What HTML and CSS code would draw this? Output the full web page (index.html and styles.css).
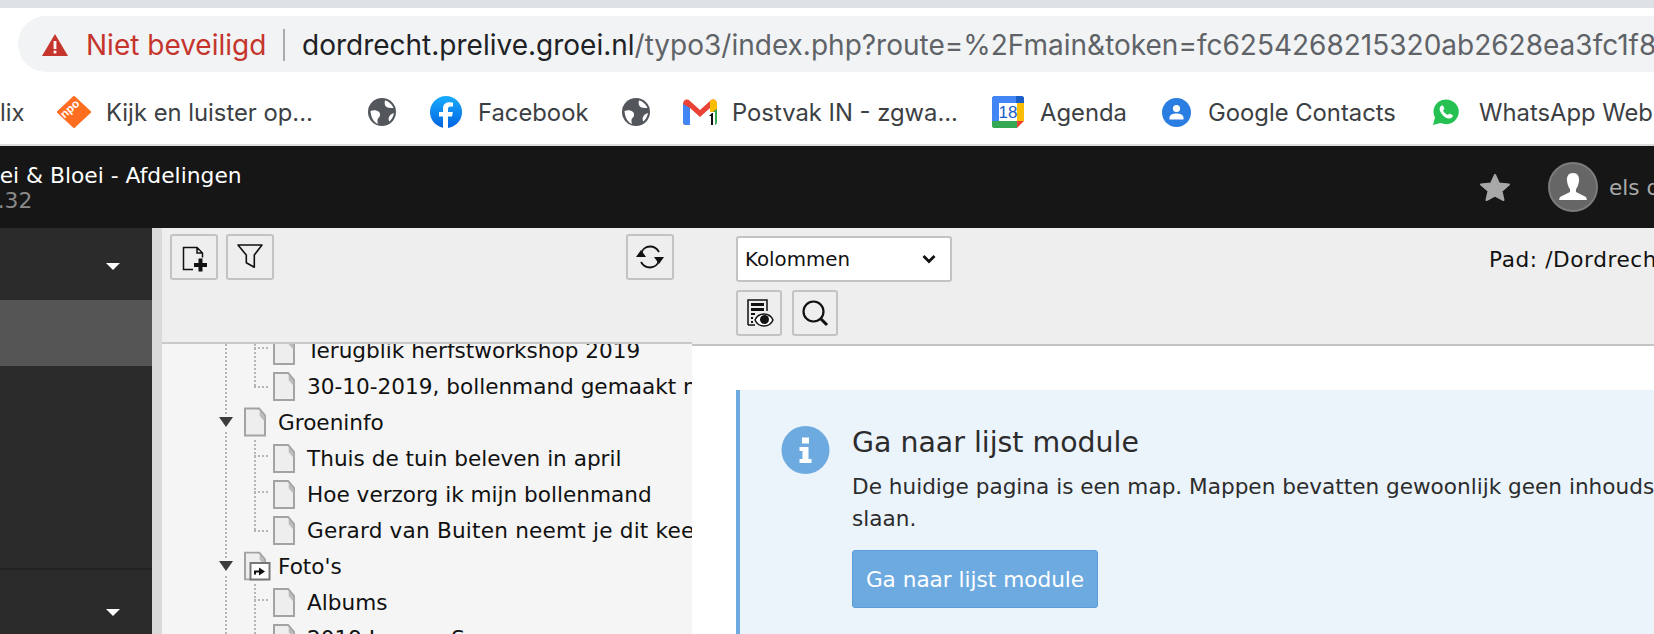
FILE: index.html
```html
<!DOCTYPE html>
<html lang="nl">
<head>
<meta charset="utf-8">
<title>Groei &amp; Bloei</title>
<link rel="stylesheet" href="styles.css">
</head>
<body>
<svg class="defs" width="0" height="0" aria-hidden="true">
  <symbol id="page" viewBox="0 0 22 29">
    <path d="M1 1H15L21 8V28H1Z" fill="#eeeeee" stroke="#a3a3a3" stroke-width="2"/>
    <path d="M15 1V8H21Z" fill="#fff"/>
    <path d="M15.5 2L20.5 8V14L15.5 8Z" fill="#bdbdbd"/>
    <path d="M15 1L21 8" stroke="#a3a3a3" stroke-width="1.4" fill="none"/>
  </symbol>
  <symbol id="globe" viewBox="0 0 28 28">
    <circle cx="14" cy="14" r="14" fill="#53575c"/>
    <path d="M17 2.500C20 3 24 6 25.500 10C22 10 19 10 17.500 8C16.500 6.500 16.500 4 17 2.500ZM2.500 13C5 12 9 12 11 14C13 16 12 19 10 20.500C9 22 9.500 24 10 26C6 24.500 3 20 2.500 13ZM26 15C25.500 18 24 21 21.500 23.500C20 22 20.500 19 22 17.500C23 16 24.500 15.500 26 15Z" fill="#fff"/>
  </symbol>
</svg>

<div class="tabstrip"></div>
<div class="urlbar">
  <div class="pill">
    <svg class="warn" viewBox="0 0 26 22"><path d="M13 0L26 22H0Z" fill="#c5352c"/><rect x="11.6" y="7" width="2.8" height="8" fill="#fff"/><rect x="11.6" y="16.6" width="2.8" height="2.8" fill="#fff"/></svg>
    <span class="insecure">Niet beveiligd</span>
    <span class="urlsep"></span>
    <span class="url"><b class="domain">dordrecht.prelive.groei.nl</b>/typo3/index.php?route=%2Fmain&amp;token=fc6254268215320ab2628ea3fc1f8</span>
  </div>
</div>
<div class="bookmarks">
  <span class="bm bm-lix">lix</span>
  <span class="bm bm-npo">
    <svg class="ic-npo" viewBox="0 0 34 32"><path d="M17 1.500L32.500 16L17 30.500L1.500 16Z" fill="#ff6d20" stroke="#ff6d20" stroke-width="3" stroke-linejoin="round"/><text x="13" y="16.500" class="npo-t" text-anchor="middle" transform="rotate(-42 13 13)">npo</text></svg>
    Kijk en luister op...
  </span>
  <svg class="ic-globe g1"><use href="#globe"/></svg>
  <span class="bm bm-fb">
    <svg class="ic-fb" viewBox="0 0 32 32"><defs><linearGradient id="fbg" x1="0" y1="0" x2="0" y2="1"><stop offset="0" stop-color="#18acfe"/><stop offset="1" stop-color="#0163e0"/></linearGradient></defs><circle cx="16" cy="16" r="16" fill="url(#fbg)"/><path d="M22 20.5L22.8 16H18V13C18 11.7 18.7 10.6 20.6 10.6H23V6.6C23 6.6 21 6.3 19.2 6.3C15.4 6.3 13 8.6 13 12.6V16H9V20.5H13V32H18V20.5Z" fill="#fff"/></svg>
    Facebook
  </span>
  <svg class="ic-globe g2"><use href="#globe"/></svg>
  <span class="bm bm-gm">
    <svg class="ic-gm" viewBox="0 0 34 26"><path d="M0 5C0 1 4 -1 7 2L17 11L27 2C30 -1 34 1 34 5V23L27 26V9L17 18L7 9V26H3C1 26 0 25 0 23Z" fill="#ea4335"/><path d="M0 5V23C0 25 1 26 3 26H7V9Z" fill="#4285f4"/><path d="M27 2C30 -1 34 1 34 5V10L27 15Z" fill="#fbbc04"/><path d="M27 15L34 10V23C34 25 33 26 31 26H27Z" fill="#34a853"/><rect x="25" y="13" width="7" height="13" fill="#fff"/><path d="M26 17L29 14H30V26H28V17Z" fill="#111"/></svg>
    Postvak IN - zgwa...
  </span>
  <span class="bm bm-ag">
    <svg class="ic-ag" viewBox="0 0 32 32"><rect width="32" height="32" rx="2" fill="#fff"/><path d="M2 0H24V7H7V25H0V2C0 1 1 0 2 0Z" fill="#4285f4"/><path d="M24 0H30C31 0 32 1 32 2V7H24Z" fill="#1a5fc8"/><path d="M25 7H32V25H25Z" fill="#fbbc04"/><path d="M0 25H25V32H2C1 32 0 31 0 30Z" fill="#34a853"/><path d="M25 25H32L25 32Z" fill="#ea4335"/><text x="16" y="22" class="ag-t" text-anchor="middle">18</text></svg>
    Agenda
  </span>
  <span class="bm bm-gc">
    <svg class="ic-gc" viewBox="0 0 29 29"><circle cx="14.5" cy="14.5" r="14.5" fill="#2a7de1"/><circle cx="14.5" cy="10.5" r="3.6" fill="#fff"/><path d="M7.5 20C7.5 16.5 11 15.5 14.5 15.5C18 15.5 21.5 16.5 21.5 20V21.5H7.5Z" fill="#fff"/></svg>
    Google Contacts
  </span>
  <span class="bm bm-wa">
    <svg class="ic-wa" viewBox="0 0 26 26"><path d="M0 26L2 18.5C-1 13 0.500 6 6 2.500C11 -1 18 0 22.500 4.500C27 9.500 27 16.500 22 21.500C18 25.500 12.500 26 7.500 24Z" fill="#25c152"/><path d="M8.500 6.500C7 7.500 6 9.500 7 12C8.500 15.500 11.500 18.500 15 19.500C17.500 20 19.500 18.500 20 16.500L16.500 14.500L15 16C13 15.500 11 13.500 10 11.500L11.500 10L10 6.500Z" fill="#fff"/></svg>
    WhatsApp Web
  </span>
</div>

<header class="appbar">
  <div class="site">
    <div class="site-name">Groei &amp; Bloei - Afdelingen</div>
    <div class="site-ver">9.5.32</div>
  </div>
  <div class="appbar-right">
    <svg class="star" viewBox="0 0 32 28"><path d="M16 2L20 10.500L30 11.500L22.500 18L24.500 27L16 22.500L7.500 27L9.500 18L2 11.500L12 10.500Z" fill="#a8a8a8" stroke="#a8a8a8" stroke-width="2" stroke-linejoin="round"/></svg>
    <span class="avatar"><svg viewBox="0 0 50 50"><circle cx="25" cy="25" r="24" fill="#666" stroke="#7c7c7c" stroke-width="2"/><path d="M25 11C20.500 11 18.500 14.500 19 19C19.500 23 21 26 22 27V30L12 35L11 38H39L38 35L28 30V27C29 26 30.500 23 31 19C31.500 14.500 29.500 11 25 11Z" fill="#fff"/></svg></span>
    <span class="username">els de Groot</span>
  </div>
</header>

<main class="app">
  <nav class="sidebar">
    <div class="side-head"><i class="caret"></i></div>
    <div class="side-active"></div>
    <div class="side-body"></div>
    <div class="side-head side-second"><i class="caret"></i></div>
  </nav>
  <div class="gutter"></div>
  <section class="treepane">
    <div class="tree-tools">
      <div class="tools-left">
        <button class="tbtn">
          <svg viewBox="0 0 30 30"><path d="M14 27.500H4.500V5.500H18L23.500 11V15.500M18 5.500V11H23.500" fill="none" stroke="#111" stroke-width="1.500"/><path d="M19.500 16.500H23.500V21H28V25H23.500V29.500H19.500V25H15V21H19.500Z" fill="#111"/></svg>
        </button>
        <button class="tbtn">
          <svg viewBox="0 0 30 30"><path d="M3 3H27L19.300 13V25.300L11.300 20.700V13Z" fill="none" stroke="#111" stroke-width="1.600" stroke-linejoin="round"/></svg>
        </button>
      </div>
      <button class="tbtn">
        <svg viewBox="0 0 30 30"><path d="M6 12C7 7 11 4.500 15 4.500C19 4.500 22 6.500 24 10M24 18C23 23 19 25.500 15 25.500C11 25.500 8 23.500 6 20" fill="none" stroke="#111" stroke-width="1.800"/><path d="M1 15L6 8L11 15ZM19 15H29L24 22Z" fill="#111"/></svg>
      </button>
    </div>
    <div class="tree">
      <ul class="tree-list">
        <li class="row l2"><svg class="pg"><use href="#page"/></svg><span>Terugblik herfstworkshop 2019</span></li>
        <li class="row l2 last"><svg class="pg"><use href="#page"/></svg><span>30-10-2019, bollenmand gemaakt met de kinderen</span></li>
        <li class="row l1"><i class="tri"></i><svg class="pg"><use href="#page"/></svg><span>Groeninfo</span></li>
        <li class="row l2"><svg class="pg"><use href="#page"/></svg><span>Thuis de tuin beleven in april</span></li>
        <li class="row l2"><svg class="pg"><use href="#page"/></svg><span>Hoe verzorg ik mijn bollenmand</span></li>
        <li class="row l2 last"><svg class="pg"><use href="#page"/></svg><span class="wide">Gerard van Buiten neemt je dit keer mee</span></li>
        <li class="row l1"><i class="tri"></i>
          <svg class="pg pg-link" viewBox="0 0 27 29"><use href="#page" width="22" height="29"/><rect x="6.500" y="11.500" width="19" height="16.500" fill="#fff" stroke="#777" stroke-width="2"/><path d="M10 23V19H15V16L21 20L15 24V21H12V23Z" fill="#111"/></svg>
          <span>Foto's</span></li>
        <li class="row l2"><svg class="pg"><use href="#page"/></svg><span>Albums</span></li>
        <li class="row l2"><svg class="pg"><use href="#page"/></svg><span>2019 Jaar op Spoor</span></li>
      </ul>
    </div>
  </section>
  <section class="content">
    <div class="doc-tools">
      <div class="doc-left">
        <div class="select"><span>Kolommen</span><svg viewBox="0 0 14 10"><path d="M1.500 2L7 7.500L12.500 2" fill="none" stroke="#111" stroke-width="2.800"/></svg></div>
        <div class="doc-btns">
          <button class="tbtn tbtn-doc">
            <svg viewBox="0 0 30 30"><path d="M4 27V2H23V13" fill="none" stroke="#111" stroke-width="1.500"/><path d="M4 27H11" stroke="#111" stroke-width="1.500"/><rect x="7" y="5" width="13" height="3" fill="#111"/><rect x="7" y="10" width="13" height="3" fill="#111"/><rect x="7" y="15" width="4" height="2" fill="#111"/><rect x="7" y="19" width="2" height="2" fill="#111"/><rect x="7" y="23" width="2" height="2" fill="#111"/><path d="M11 22C13 17.500 16 16 20 16C24 16 27 17.500 29 22C27 26.500 24 28 20 28C16 28 13 26.500 11 22Z" fill="#fff" stroke="#111" stroke-width="1.500"/><circle cx="20.500" cy="21.500" r="4.500" fill="#111"/></svg>
          </button>
          <button class="tbtn tbtn-doc">
            <svg viewBox="0 0 30 30"><circle cx="13.500" cy="13.500" r="10" fill="none" stroke="#111" stroke-width="2.200"/><path d="M21 21L27 27" stroke="#111" stroke-width="3"/></svg>
          </button>
        </div>
      </div>
      <div class="path">Pad: /Dordrecht/Groei &amp; Bloei</div>
    </div>
    <div class="doc-body">
      <div class="alert">
        <svg class="alert-ic" viewBox="0 0 48 48"><circle cx="24" cy="24" r="24" fill="#6daae0"/><rect x="20.500" y="11.500" width="7" height="6" fill="#fff"/><path d="M18 21H27V33H30V37H18V33H21V25H18Z" fill="#fff"/></svg>
        <div class="alert-main">
          <h4 class="alert-title">Ga naar lijst module</h4>
          <p class="alert-text">De huidige pagina is een map. Mappen bevatten gewoonlijk geen inhoudselementen en worden daarom beter overge-<br>slaan.</p>
          <button class="alert-btn">Ga naar lijst module</button>
        </div>
      </div>
    </div>
  </section>
</main>
</body>
</html>
```
FILE: styles.css
```css
* { box-sizing: border-box; }
html, body { margin: 0; padding: 0; }
body {
  width: 1654px;
  height: 634px;
  overflow: hidden;
  background: #fff;
  font-family: "DejaVu Sans", Verdana, sans-serif;
}
.defs { display: block; height: 0; }

/* browser chrome */
.tabstrip { height: 8px; background: #dee1e6; }
.urlbar { height: 72px; padding: 8px 0 0 18px; overflow: hidden; }
.pill {
  display: flex;
  align-items: center;
  width: 1700px;
  height: 56px;
  padding: 2px 0 0 24px;
  border-radius: 28px;
  background: #f1f3f4;
  font-family: Inter, "Liberation Sans", sans-serif;
  font-size: 28px;
  white-space: nowrap;
}
.warn { width: 26px; height: 22px; flex: none; }
.insecure { margin-left: 18px; color: #c5352c; width: 180px; flex: none; }
.urlsep { width: 2px; height: 32px; margin: 0 17px 0 17px; background: #a9abad; flex: none; }
.url { color: #5f6368; }
.domain { color: #202124; font-weight: 400; }

.bookmarks {
  display: flex;
  align-items: center;
  height: 66px;
  overflow: hidden;
  white-space: nowrap;
  font-family: Inter, "Liberation Sans", sans-serif;
  font-size: 23.8px;
  color: #3c4043;
  border-bottom: 2px solid #dcdcdc;
}
.bm { display: inline-flex; align-items: center; flex: none; }
.bm svg { flex: none; }
.bm-lix { width: 57px; }
.bm-npo { width: 311px; gap: 15px; }
.ic-npo { width: 34px; height: 32px; }
.npo-t { font: 700 11.500px "Liberation Sans", sans-serif; fill: #fff; }
.ic-globe { width: 28px; height: 28px; flex: none; }
.g1 { margin-right: 34px; }
.bm-fb { width: 192px; gap: 16px; }
.ic-fb { width: 32px; height: 32px; }
.g2 { margin-right: 33px; }
.bm-gm { width: 309px; gap: 15px; }
.ic-gm { width: 34px; height: 26px; }
.bm-ag { width: 170px; gap: 16px; }
.ic-ag { width: 32px; height: 32px; }
.ag-t { font: 400 17px "Liberation Sans", sans-serif; fill: #1a5fc8; }
.bm-gc { width: 271px; gap: 17px; }
.ic-gc { width: 29px; height: 29px; }
.bm-wa { gap: 20px; }
.ic-wa { width: 26px; height: 26px; }

/* application header */
.appbar {
  display: flex;
  justify-content: space-between;
  height: 82px;
  background: #161616;
  overflow: hidden;
}
.site { margin-left: -39px; padding-top: 17px; }
.site-name { font-size: 21.800px; line-height: 26px; color: #fff; white-space: nowrap; }
.site-ver { padding-left: 2px; font-size: 21.800px; line-height: 24px; color: #8a8a8a; }
.appbar-right { display: flex; align-items: center; width: 175px; flex: none; white-space: nowrap; overflow: hidden; }
.star { width: 32px; height: 28px; flex: none; }
.avatar { width: 50px; height: 50px; margin-left: 37px; flex: none; }
.avatar svg { display: block; width: 50px; height: 50px; }
.username { margin-left: 11px; font-size: 21.6px; color: #aaaaaa; }

/* layout */
.app { display: flex; height: 406px; }
.sidebar { width: 152px; flex: none; display: flex; flex-direction: column; background: #2b2b2b; }
.side-head { height: 72px; display: flex; align-items: center; justify-content: flex-end; padding: 4px 32px 0 0; background: #2b2b2b; }
.side-active { height: 66px; background: #555555; }
.side-body { height: 204px; background: #2b2b2b; border-bottom: 2px solid #222; }
.side-second { height: 64px; padding-top: 20px; }
.caret { width: 0; height: 0; border-left: 7px solid transparent; border-right: 7px solid transparent; border-top: 7px solid #fff; }
.gutter { width: 10px; flex: none; background: #dadada; }

/* tree */
.treepane { width: 530px; flex: none; display: flex; flex-direction: column; background: #f5f5f5; overflow: hidden; }
.tree-tools {
  height: 116px;
  flex: none;
  display: flex;
  align-items: flex-start;
  justify-content: space-between;
  padding: 6px 18px 0 8px;
  background: #eeeeee;
  border-bottom: 2px solid #c9c9c9;
}
.tools-left { display: flex; gap: 8px; }
.tbtn {
  display: flex;
  align-items: center;
  justify-content: center;
  width: 48px;
  height: 46px;
  padding: 0;
  background: #eeeeee;
  border: 2px solid #c3c3c3;
  border-radius: 3px;
}
.tbtn svg { width: 30px; height: 30px; display: block; }
.tree { flex: 1; overflow: hidden; }
.tree-list { list-style: none; margin: -12px 0 0; padding: 0; }
.row {
  display: flex;
  align-items: center;
  height: 36px;
  white-space: nowrap;
  font-size: 21.6px;
  color: #111;
  background-repeat: no-repeat, no-repeat, no-repeat;
}
.pg { width: 22px; height: 29px; flex: none; }
.l1 {
  padding-left: 57px;
  background-image:
    repeating-linear-gradient(to bottom, #b5b5b5 0 2px, transparent 2px 4px),
    repeating-linear-gradient(to bottom, #b5b5b5 0 2px, transparent 2px 4px);
  background-size: 2px 10px, 2px 8px;
  background-position: 63px 0, 63px 28px;
}
.l1 .pg { margin-left: 11px; height: 30px; }
.l1 .pg-link { width: 27px; }
.l1 span { margin-left: 12px; }
.l1 .pg-link + span { margin-left: 7px; }
.tri { width: 0; height: 0; flex: none; border-left: 7px solid transparent; border-right: 7px solid transparent; border-top: 10px solid #3d3d3d; }
.l2 {
  padding-left: 111px;
  background-image:
    repeating-linear-gradient(to bottom, #b5b5b5 0 2px, transparent 2px 4px),
    repeating-linear-gradient(to bottom, #b5b5b5 0 2px, transparent 2px 4px),
    repeating-linear-gradient(to right, #b5b5b5 0 2px, transparent 2px 4px);
  background-size: 2px 100%, 2px 100%, 15px 2px;
  background-position: 63px 0, 92px 0, 92px 15px;
}
.l2.last { background-size: 2px 100%, 2px 18px, 15px 2px; background-position: 63px 0, 92px 0, 92px 18px; }
.l2 span { margin-left: 12px; }
.l2 .wide { letter-spacing: 0.2px; }

/* content */
.content { flex: 1; min-width: 0; display: flex; flex-direction: column; background: #fff; }
.doc-tools {
  height: 118px;
  flex: none;
  display: flex;
  justify-content: space-between;
  padding: 8px 0 0 44px;
  background: #eeeeee;
  border-bottom: 2px solid #c4c4c4;
}
.doc-left { display: flex; flex-direction: column; gap: 8px; }
.select {
  display: flex;
  align-items: center;
  justify-content: space-between;
  width: 216px;
  height: 46px;
  padding: 0 14px 0 7px;
  background: #fff;
  border: 2px solid #c3c3c3;
  border-radius: 3px;
  font-size: 19.800px;
  color: #111;
}
.select svg { width: 14px; height: 10px; }
.doc-btns { display: flex; gap: 10px; }
.tbtn-doc { width: 46px; }
.path { width: 165px; padding-top: 11px; font-size: 21.6px; letter-spacing: 0.6px; color: #111; white-space: nowrap; overflow: hidden; }
.doc-body { flex: 1; padding: 44px 0 0 44px; overflow: hidden; }
.alert {
  display: flex;
  width: 1200px;
  height: 260px;
  padding: 36px 0 0 41px;
  background: #ebf3fb;
  border-left: 4px solid #6daae0;
}
.alert-ic { width: 49px; height: 48px; flex: none; }
.alert-main { margin-left: 22px; }
.alert-title { margin: 0; font-size: 28.4px; line-height: 34px; font-weight: 400; color: #2c2c2c; }
.alert-text { margin: 11px 0 0; font-size: 21.6px; line-height: 32px; color: #2c2c2c; white-space: nowrap; }
.alert-btn {
  display: block;
  margin-top: 15px;
  width: 246px;
  height: 58px;
  padding: 0;
  background: #6daae0;
  border: 1px solid #5a9cd8;
  border-radius: 3px;
  font: 21.6px "DejaVu Sans", Verdana, sans-serif;
  color: #fff;
}
```
